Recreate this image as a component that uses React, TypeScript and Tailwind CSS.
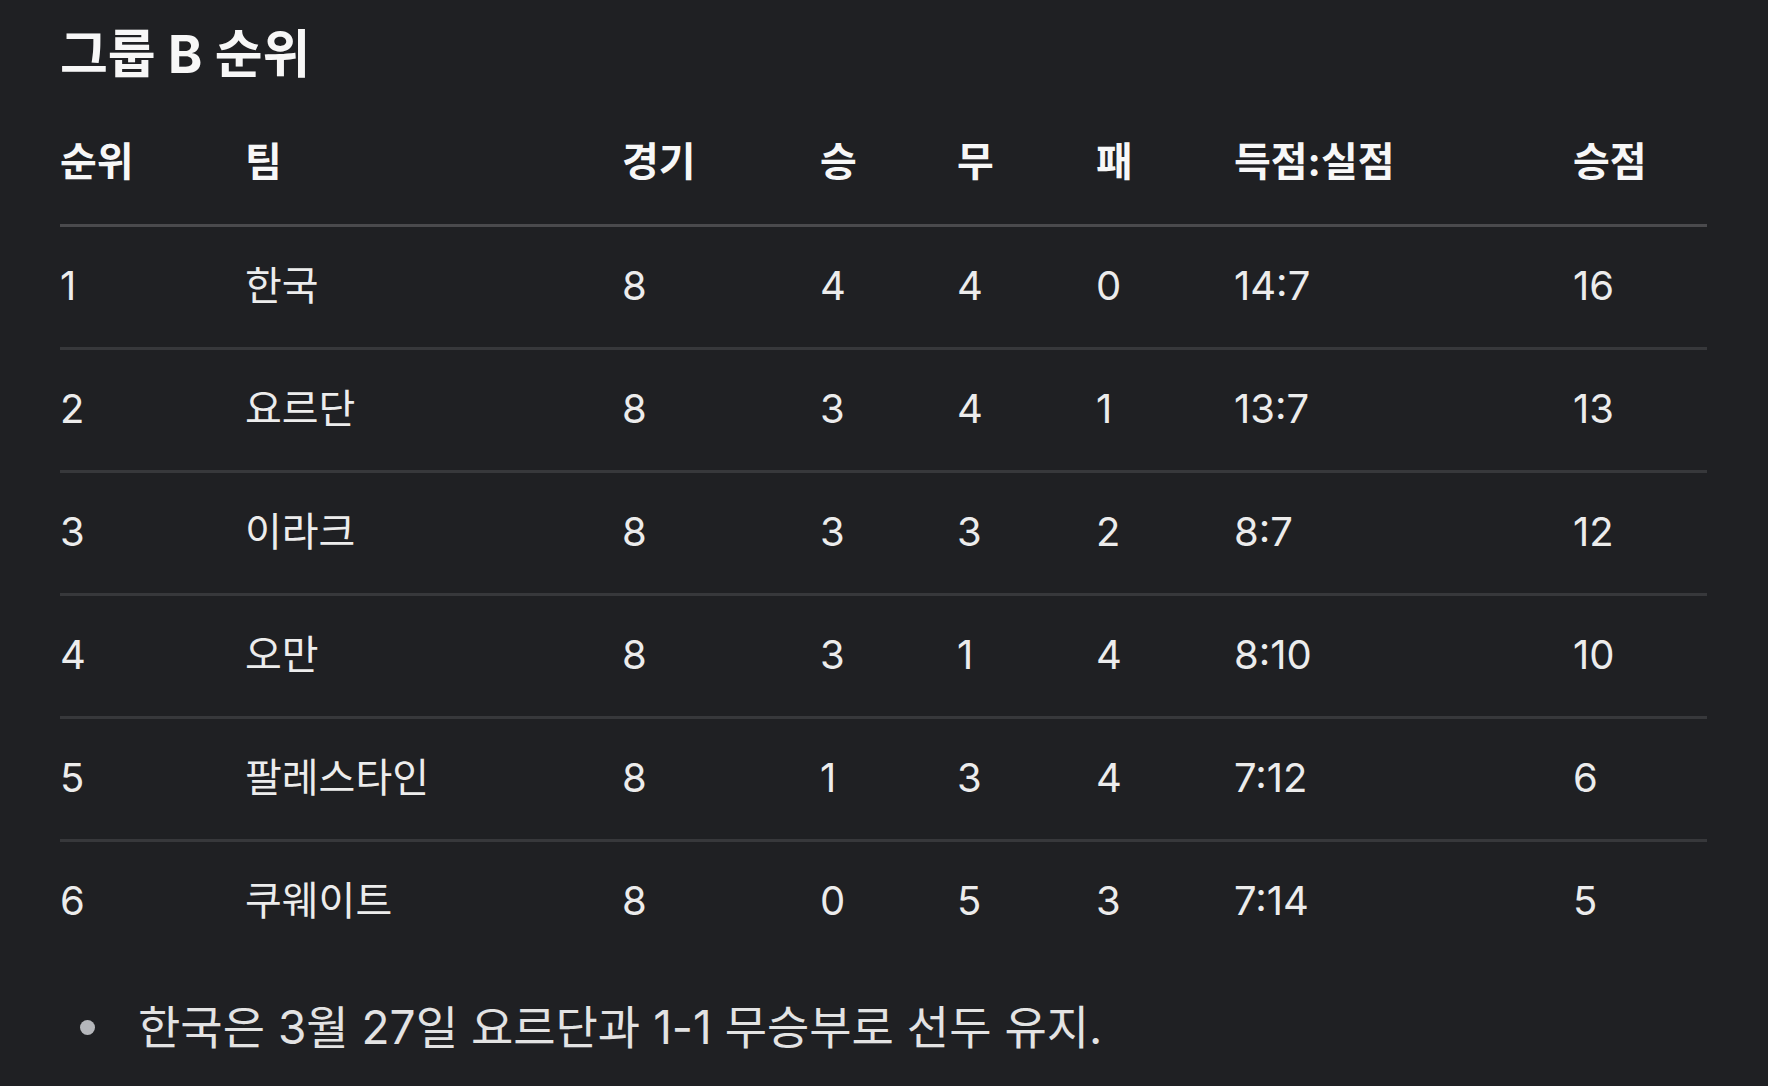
const rows = [
  { rank: 1, team: "한국", played: 8, w: 4, d: 4, l: 0, goals: "14:7", pts: 16 },
  { rank: 2, team: "요르단", played: 8, w: 3, d: 4, l: 1, goals: "13:7", pts: 13 },
  { rank: 3, team: "이라크", played: 8, w: 3, d: 3, l: 2, goals: "8:7", pts: 12 },
  { rank: 4, team: "오만", played: 8, w: 3, d: 1, l: 4, goals: "8:10", pts: 10 },
  { rank: 5, team: "팔레스타인", played: 8, w: 1, d: 3, l: 4, goals: "7:12", pts: 6 },
  { rank: 6, team: "쿠웨이트", played: 8, w: 0, d: 5, l: 3, goals: "7:14", pts: 5 },
];

const font = { fontFamily: '"Inter", "Noto Sans CJK KR", sans-serif' };

export default function App() {
  return (
    <div className="min-h-screen w-full bg-[#1f2023] pl-[60px] pr-[61px] pt-[21px] text-[#ececec]" style={font}>
      <h2 className="text-[52px] font-bold leading-[68px] text-[#f7f7f7]">그룹 B 순위</h2>

      <table className="mt-[12px] w-full table-fixed border-collapse text-left text-[40px]">
        <thead>
          <tr className="border-b-[3px] border-[#4a4a4d]">
            <th className="h-[124px] w-[185px] p-0 font-bold text-[#f7f7f7]">순위</th>
            <th className="w-[377px] p-0 font-bold text-[#f7f7f7]">팀</th>
            <th className="w-[198px] p-0 font-bold text-[#f7f7f7]">경기</th>
            <th className="w-[137px] p-0 font-bold text-[#f7f7f7]">승</th>
            <th className="w-[139px] p-0 font-bold text-[#f7f7f7]">무</th>
            <th className="w-[138px] p-0 font-bold text-[#f7f7f7]">패</th>
            <th className="w-[339px] p-0 font-bold text-[#f7f7f7]">득점:실점</th>
            <th className="p-0 font-bold text-[#f7f7f7]">승점</th>
          </tr>
        </thead>
        <tbody>
          {rows.map((r, i) => (
            <tr key={r.rank} className={i < rows.length - 1 ? "border-b-[3px] border-[#37383b]" : ""}>
              <td className="h-[123px] p-0 pb-[2px]">{r.rank}</td>
              <td className="p-0 pb-[2px]">{r.team}</td>
              <td className="p-0 pb-[2px]">{r.played}</td>
              <td className="p-0 pb-[2px]">{r.w}</td>
              <td className="p-0 pb-[2px]">{r.d}</td>
              <td className="p-0 pb-[2px]">{r.l}</td>
              <td className="p-0 pb-[2px]">{r.goals}</td>
              <td className="p-0 pb-[2px]">{r.pts}</td>
            </tr>
          ))}
        </tbody>
      </table>

      <ul className="mt-[30px]">
        <li className="flex items-center text-[46px] leading-[68px] text-[#e3e3e3]">
          <span className="ml-[20px] mr-[43px] h-[15px] w-[15px] shrink-0 rounded-full bg-[#b5b7bb]" />
          <span>한국은 3월 27일 요르단과 1-1 무승부로 선두 유지.</span>
        </li>
      </ul>
    </div>
  );
}
